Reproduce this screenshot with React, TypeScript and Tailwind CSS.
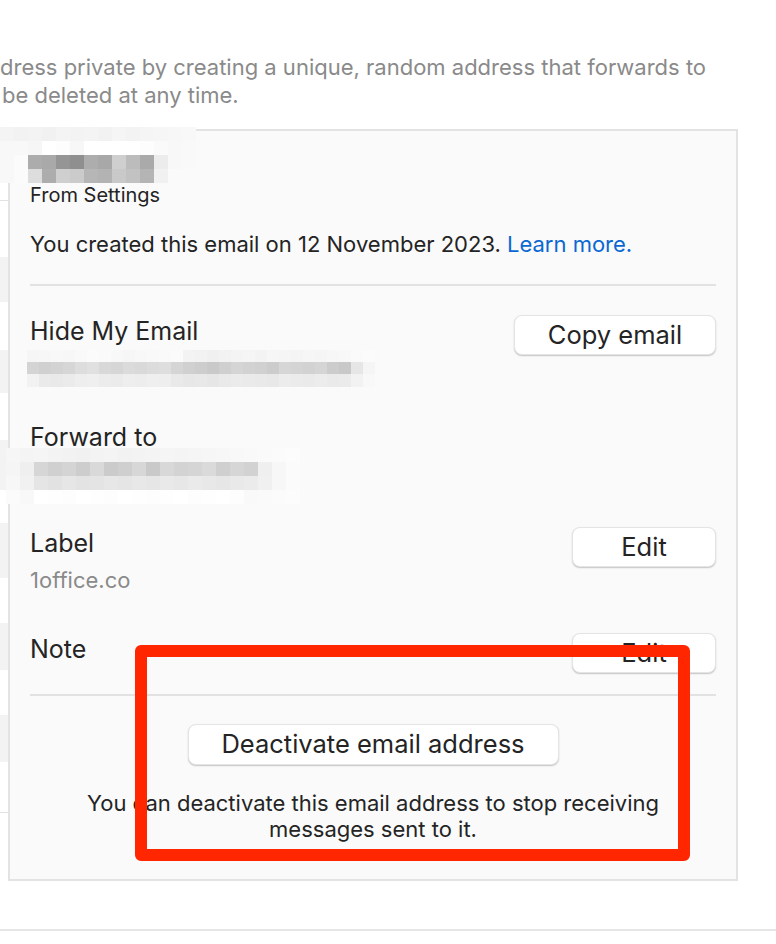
import React from "react";

type PixRow = { h: number; cells: string[] };

function Pixelate({ rows, cell, className }: { rows: PixRow[]; cell: number; className?: string }) {
  return (
    <div className={"flex flex-col " + (className ?? "")}>
      {rows.map((r, i) => (
        <div key={i} className="flex">
          {r.cells.map((c, j) => (
            <div key={j} style={{ width: cell, height: r.h, background: c }} />
          ))}
        </div>
      ))}
    </div>
  );
}

const nameRows: PixRow[] = [
  { h: 14, cells: ["#f4f4f4", "#f2f2f2", "#f3f3f3", "#f1f1f1", "#f4f4f4", "#f3f3f3", "#f4f4f4", "#f2f2f2", "#f5f5f5", "#f3f3f3", "#f5f5f5", "#f6f6f6", "#f7f7f7", "#f8f8f8"] },
  { h: 14, cells: ["#f8f8f8", "#f8f8f8", "#f6f6f6", "#ffffff", "#fdfdfd", "#f7f7f7", "#ffffff", "#ffffff", "#ffffff", "#ffffff", "#fdfdfd", "#fafafa", "#f8f8f8", "#f9f9f9"] },
  { h: 14, cells: ["#f8f8f8", "#fbfbfb", "#acacac", "#a9a9a9", "#959595", "#8f8f8f", "#adadad", "#a8a8a8", "#cfcfcf", "#bcbcbc", "#aaaaaa", "#ececec", "#f8f8f8", "#f9f9f9"] },
  { h: 14, cells: ["#f8f8f8", "#fbfbfb", "#dddddd", "#adadad", "#cfcfcf", "#cbcbcb", "#b6b6b6", "#b3b3b3", "#c9c9c9", "#c2c2c2", "#b4b4b4", "#f1f1f1", "#fafafa", "#fafafa"] },
];

const hideRows: PixRow[] = [
  { h: 12, cells: ["#f6f6f6", "#f7f7f7", "#f8f8f8", "#f7f7f7", "#f9f9f9", "#fbfbfb", "#fafafa", "#f8f8f8", "#f6f6f6", "#f8f8f8", "#f9f9f9", "#fafafa", "#fbfbfb", "#f3f3f3", "#f2f2f2", "#f0f0f0", "#f2f2f2", "#f4f4f4", "#f5f5f5", "#f3f3f3", "#f6f6f6", "#f5f5f5", "#f4f4f4", "#f6f6f6", "#f5f5f5", "#f7f7f7", "#f8f8f8", "#fafafa", "#fbfbfb"] },
  { h: 12, cells: ["#d4d4d4", "#d0d0d0", "#d3d3d3", "#d6d6d6", "#dddddd", "#e0e0e0", "#d8d8d8", "#d6d6d6", "#dbdbdb", "#d9d9d9", "#dcdcdc", "#dedede", "#d5d5d5", "#d0d0d0", "#cdcdcd", "#c9c9c9", "#cfcfcf", "#d5d5d5", "#d2d2d2", "#d0d0d0", "#cccccc", "#d6d6d6", "#d4d4d4", "#d2d2d2", "#d5d5d5", "#cccccc", "#c8c8c8", "#e6e6e6", "#f5f5f5"] },
  { h: 13, cells: ["#f2f2f2", "#eaeaea", "#e9e9e9", "#ebebeb", "#eeeeee", "#efefef", "#ececec", "#ebebeb", "#eeeeee", "#ededed", "#efefef", "#eeeeee", "#e9e9e9", "#e7e7e7", "#e8e8e8", "#e6e6e6", "#e9e9e9", "#ebebeb", "#eaeaea", "#e9e9e9", "#e8e8e8", "#ececec", "#ebebeb", "#eaeaea", "#ececec", "#eaeaea", "#ebebeb", "#f2f2f2", "#f8f8f8"] },
];

const fwdRows: PixRow[] = [
  { h: 14, cells: ["#f6f6f6", "#f4f4f4", "#f5f5f5", "#f3f3f3", "#f2f2f2", "#f1f1f1", "#f3f3f3", "#f4f4f4", "#f2f2f2", "#f3f3f3", "#f4f4f4", "#f5f5f5", "#f4f4f4", "#f5f5f5", "#f6f6f6", "#f7f7f7", "#f8f8f8", "#f9f9f9", "#fafafa", "#fbfbfb", "#fcfcfc"] },
  { h: 14, cells: ["#f5f5f5", "#efefef", "#d6d6d6", "#d0d0d0", "#d4d4d4", "#cdcdcd", "#d9d9d9", "#cbcbcb", "#cfcfcf", "#d7d7d7", "#c9c9c9", "#d8d8d8", "#d3d3d3", "#d5d5d5", "#dadada", "#cfcfcf", "#d6d6d6", "#d2d2d2", "#efefef", "#f7f7f7", "#fbfbfb"] },
  { h: 14, cells: ["#f7f7f7", "#f1f1f1", "#e5e5e5", "#e2e2e2", "#e6e6e6", "#e3e3e3", "#e4e4e4", "#e7e7e7", "#e5e5e5", "#e8e8e8", "#e6e6e6", "#e9e9e9", "#e7e7e7", "#eaeaea", "#e8e8e8", "#e6e6e6", "#e9e9e9", "#ebebeb", "#f0f0f0", "#f7f7f7", "#fbfbfb"] },
  { h: 14, cells: ["#fbfbfb", "#f8f8f8", "#ffffff", "#fefefe", "#fdfdfd", "#ffffff", "#fefefe", "#fdfdfd", "#ffffff", "#fefefe", "#fdfdfd", "#fefefe", "#ffffff", "#fdfdfd", "#fefefe", "#ffffff", "#fdfdfd", "#f9f9f9", "#fafafa", "#fbfbfb", "#fcfcfc"] },
];

function Btn({ children, className }: { children: React.ReactNode; className?: string }) {
  return (
    <div
      className={
        "flex items-center justify-center rounded-[8px] bg-white border border-[#e4e4e4] shadow-[0_1px_1.5px_rgba(0,0,0,0.22)] text-[25.5px] text-[#242424] " +
        (className ?? "")
      }
    >
      {children}
    </div>
  );
}

export default function App() {
  return (
    <div className="w-[776px] h-[944px] bg-white relative overflow-hidden font-['Inter',sans-serif] text-[#242424]">
      {/* header text */}
      <div className="pt-[53px] text-[22px] leading-[28px] text-[#8a8a8a] whitespace-nowrap">
        <div>dress private by creating a unique, random address that forwards to</div>
        <div className="pl-[2px]">be deleted at any time.</div>
      </div>

      <div className="mt-[20px] flex">
        {/* background list strip */}
        <div className="w-[8px] flex flex-col">
          <div className="h-[71px]" />
          <div className="h-[1px] bg-[#e2e2e2]" />
          <div className="h-[56px]" />
          <div className="h-[45px] bg-[#f3f3f3]" />
          <div className="h-[48px]" />
          <div className="h-[43px] bg-[#f3f3f3]" />
          <div className="h-[47px]" />
          <div className="h-[50px] bg-[#f3f3f3]" />
          <div className="h-[33px]" />
          <div className="h-[55px] bg-[#f3f3f3]" />
          <div className="h-[45px]" />
          <div className="h-[47px] bg-[#f3f3f3]" />
          <div className="h-[45px]" />
          <div className="h-[47px] bg-[#f3f3f3]" />
          <div className="h-[50px]" />
          <div className="h-[1px] bg-[#e2e2e2]" />
        </div>

        {/* panel */}
        <div className="w-[730px] h-[752px] border-2 border-[#e3e3e3] bg-[#fafafa] px-[20px] flex flex-col">
          <div className="h-[52px]" />
          <div className="text-[20px] leading-[24px]">From Settings</div>
          <div className="mt-[24px] text-[22px] leading-[26px]">
            You created this email on 12 November 2023.{" "}
            <span className="text-[#0a68d2]">Learn more.</span>
          </div>
          <div className="mt-[27px] h-[2px] bg-[#e2e2e2]" />

          {/* Hide My Email */}
          <div className="mt-[29px] flex justify-between items-start">
            <div className="flex flex-col">
              <div className="text-[25px] leading-[32px]">Hide My Email</div>
              <Pixelate rows={hideRows} cell={12} className="-ml-[3px] mt-[3px]" />
            </div>
            <Btn className="w-[202px] h-[40px]">Copy email</Btn>
          </div>

          {/* Forward to */}
          <div className="mt-[34px] text-[25px] leading-[32px]">Forward to</div>
          <Pixelate rows={fwdRows} cell={14} className="-ml-[24px] -mt-[5px]" />

          {/* Label */}
          <div className="mt-[23px] flex justify-between items-start">
            <div className="flex flex-col">
              <div className="text-[25px] leading-[32px]">Label</div>
              <div className="mt-[8px] text-[22px] leading-[26px] text-[#8a8a8a]">1office.co</div>
            </div>
            <Btn className="w-[144px] h-[40px]">Edit</Btn>
          </div>

          {/* Note */}
          <div className="mt-[40px] flex justify-between items-start">
            <div className="text-[25px] leading-[32px]">Note</div>
            <Btn className="w-[144px] h-[40px]">Edit</Btn>
          </div>

          <div className="mt-[21px] h-[2px] bg-[#e2e2e2]" />

          <div className="mt-[28px] flex justify-center">
            <Btn className="w-[371px] h-[41px]">Deactivate email address</Btn>
          </div>

          <div className="mt-[25px] text-[22px] leading-[26px] text-center">
            You can deactivate this email address to stop receiving
            <br />
            messages sent to it.
          </div>
        </div>
      </div>

      {/* bottom separator */}
      <div className="mt-[48px] h-[2px] bg-[#e6e6e6]" />

      {/* pixelated name overlay */}
      <Pixelate rows={nameRows} cell={14} className="absolute left-0 top-[127px]" />

      {/* red annotation box */}
      <div className="absolute left-[135px] top-[645px] w-[555px] h-[216px] border-[12px] border-[#ff2600] rounded-[6px]" />
    </div>
  );
}
